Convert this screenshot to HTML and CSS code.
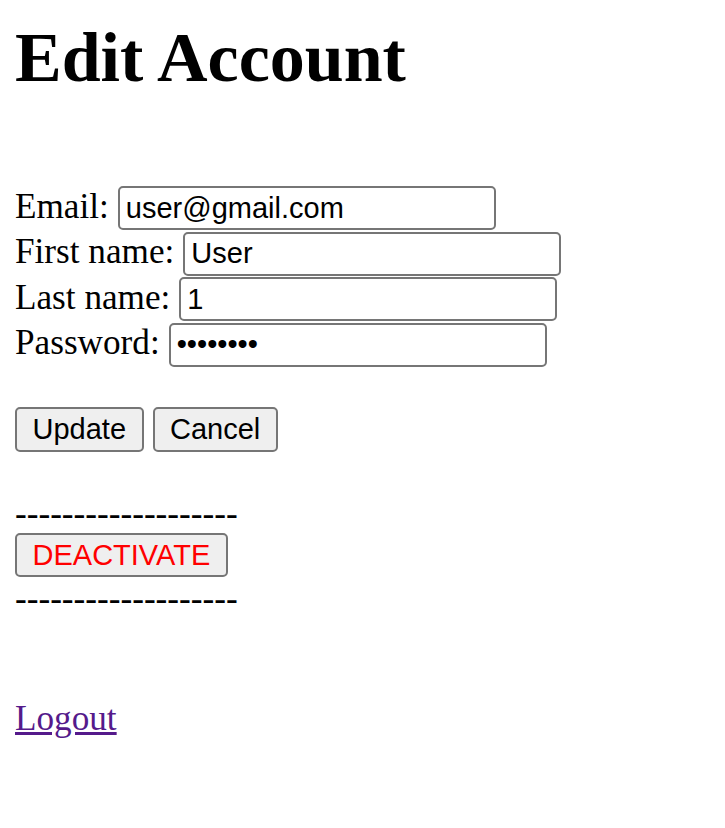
FILE: index.html
```html
<!DOCTYPE html>
<html lang="en">
<head>
<meta charset="utf-8">
<title>Edit Account</title>
<link rel="stylesheet" href="styles.css">
</head>
<body>
<h1 class="title">Edit Account</h1>
<form class="form">
  <div class="row"><label class="label" for="email">Email:</label><input class="field" id="email" type="text" value="user@gmail.com"></div>
  <div class="row"><label class="label" for="first">First name:</label><input class="field" id="first" type="text" value="User"></div>
  <div class="row"><label class="label" for="last">Last name:</label><input class="field" id="last" type="text" value="1"></div>
  <div class="row"><label class="label" for="pass">Password:</label><input class="field" id="pass" type="password" value="12345678"></div>
  <div class="actions"><button class="btn" type="button">Update</button><button class="btn" type="button">Cancel</button></div>
</form>
<div class="danger">
  <div class="rule">-------------------</div>
  <button class="btn btn-danger" type="button">DEACTIVATE</button>
  <div class="rule">-------------------</div>
</div>
<a class="logout" href="#">Logout</a>
</body>
</html>
```
FILE: styles.css
```css
html, body {
  background: #fff;
}
body {
  margin: 0;
  padding: 18px 15px 0;
  font-family: "Liberation Serif", "Times New Roman", serif;
  font-size: 35.2px;
  line-height: 40px;
  color: #000;
}
.title {
  margin: 0;
  font-size: 70px;
  line-height: 80px;
  font-weight: bold;
}
.form {
  margin: 88px 0 0;
}
.row {
  display: flex;
  align-items: baseline;
  gap: 9px;
  height: 45.5px;
}
.label {
  white-space: nowrap;
}
.field {
  box-sizing: border-box;
  width: 378px;
  height: 44px;
  margin: 0;
  padding: 0 6px;
  border: 2px solid #767676;
  border-radius: 5px;
  background: #fff;
  font-family: "Liberation Sans", Arial, sans-serif;
  font-size: 29px;
  color: #000;
}
.actions {
  display: flex;
  gap: 9px;
  margin-top: 39px;
}
.btn {
  box-sizing: border-box;
  height: 45px;
  margin: 0;
  padding: 0 15.5px;
  border: 2px solid #767676;
  border-radius: 5px;
  background: #efefef;
  font-family: "Liberation Sans", Arial, sans-serif;
  font-size: 29px;
  line-height: 1;
  color: #000;
}
.danger {
  margin-top: 42px;
}
.rule {
  height: 40px;
  white-space: nowrap;
}
.btn-danger {
  display: block;
  height: 44px;
  margin: -1px 0 2px;
  padding: 0 15.5px;
  color: #f00;
}
.logout {
  display: inline-block;
  margin-top: 80px;
  color: #551a8b;
  text-decoration: underline;
}
```
